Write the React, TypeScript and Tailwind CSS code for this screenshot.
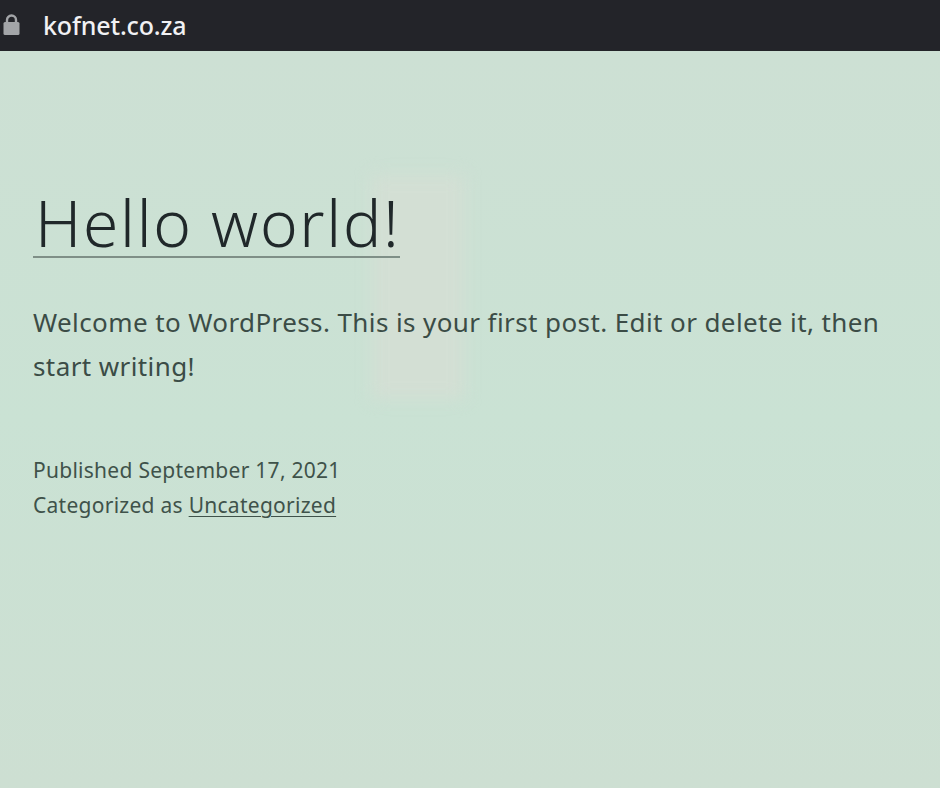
export default function App() {
  return (
    <div className="w-[940px] h-[788px] overflow-hidden flex flex-col bg-[#cce0d2] font-['Noto_Sans','Open_Sans',sans-serif]">
      <header className="h-[51px] shrink-0 bg-[#232429] flex items-center">
        <svg className="ml-[3px] mb-[3px]" width="17" height="23" viewBox="0 0 17 23" aria-hidden="true">
          <path d="M4 10V7a4.5 4.5 0 0 1 9 0v3" fill="none" stroke="#a3a5a8" strokeWidth="2.4" />
          <rect x="0.5" y="9" width="16" height="13" rx="1.5" fill="#a3a5a8" />
        </svg>
        <span className="ml-[23px] mb-[2px] text-[25px] leading-[30px] font-medium tracking-[-0.15px] text-[#f1f1f3]">kofnet.co.za</span>
      </header>
      <main className="relative flex-1 pl-[33px] pr-[40px] pt-[139px] bg-gradient-to-b from-[#cde0d4] via-[#cae2d4] to-[#cddfd2]">
        <div className="absolute left-[372px] top-[124px] w-[92px] h-[224px] bg-[#d3dfd4] blur-[8px]" />
        <h1 className="relative inline-block border-b-2 border-[#7f8f87] text-[64px] leading-[66px] font-light tracking-[1.7px] text-[#20282a] pl-[2px]">Hello world!</h1>
        <p className="relative mt-[42px] w-[870px] text-[26px] leading-[44px] tracking-[0.4px] text-[#3b4c46]">Welcome to WordPress. This is your first post. Edit or delete it, then start writing!</p>
        <div className="relative mt-[65px] text-[21px] leading-[35px] tracking-[0.27px] text-[#3f524a]">
          <p>Published September 17, 2021</p>
          <p>Categorized as <a className="underline underline-offset-3 decoration-1">Uncategorized</a></p>
        </div>
      </main>
    </div>
  );
}
